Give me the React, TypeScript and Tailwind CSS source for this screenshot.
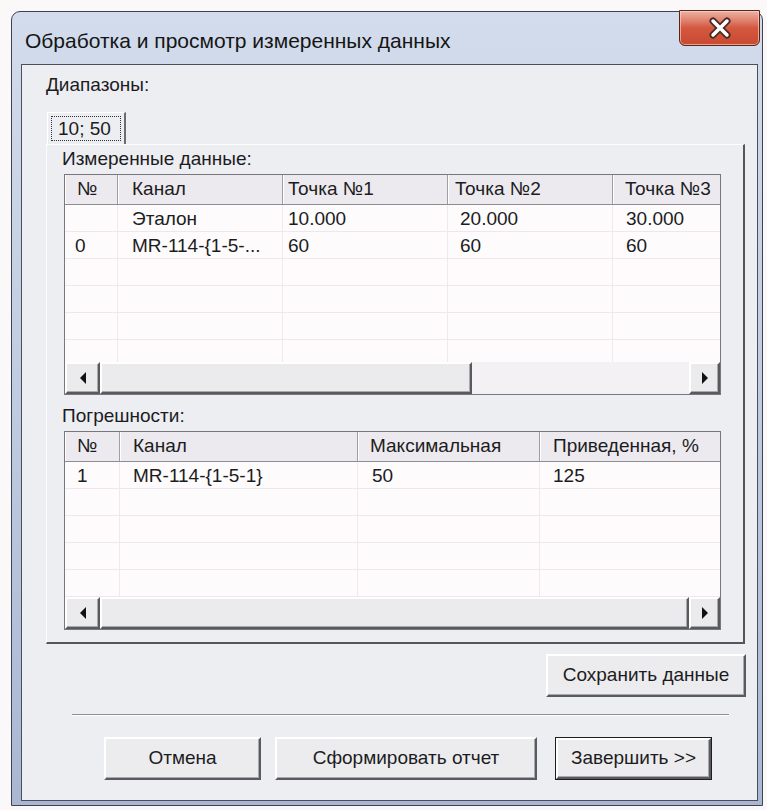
import React from 'react';

type Col = { title: string; w: string; hp: string; bp: string };

const measuredCols: Col[] = [
  { title: '№', w: 'w-[53px]', hp: 'pl-[12px]', bp: 'pl-[10px]' },
  { title: 'Канал', w: 'w-[165px]', hp: 'pl-[14px]', bp: 'pl-[14px]' },
  { title: 'Точка №1', w: 'w-[165px]', hp: 'pl-[5px]', bp: 'pl-[5px]' },
  { title: 'Точка №2', w: 'w-[165px]', hp: 'pl-[7px]', bp: 'pl-[12px]' },
  { title: 'Точка №3', w: 'w-[165px]', hp: 'pl-[12px]', bp: 'pl-[13px]' },
];

const measuredRows: string[][] = [
  ['', 'Эталон', '10.000', '20.000', '30.000'],
  ['0', 'MR-114-{1-5-...', '60', '60', '60'],
  ['', '', '', '', ''],
  ['', '', '', '', ''],
  ['', '', '', '', ''],
  ['', '', '', '', ''],
];

const errorCols: Col[] = [
  { title: '№', w: 'w-[55px]', hp: 'pl-[12px]', bp: 'pl-[12px]' },
  { title: 'Канал', w: 'w-[238px]', hp: 'pl-[13px]', bp: 'pl-[13px]' },
  { title: 'Максимальная', w: 'w-[182px]', hp: 'pl-[12px]', bp: 'pl-[14px]' },
  { title: 'Приведенная, %', w: 'w-[200px]', hp: 'pl-[13px]', bp: 'pl-[13px]' },
];

const errorRows: string[][] = [
  ['1', 'MR-114-{1-5-1}', '50', '125'],
  ['', '', '', ''],
  ['', '', '', ''],
  ['', '', '', ''],
  ['', '', '', ''],
];

const raised =
  'border-2 border-t-white border-l-white border-r-[#5a5a5e] border-b-[#5a5a5e] shadow-[inset_-1px_-1px_0_#a9a9ad] bg-[#ebebee]';

const Arrow = ({ dir }: { dir: 'left' | 'right' }) => (
  <svg width="8" height="12" viewBox="0 0 8 12">
    {dir === 'left' ? <polygon points="7,0 7,12 1,6" fill="#111" /> : <polygon points="1,0 1,12 7,6" fill="#111" />}
  </svg>
);

const HScroll = ({ thumb }: { thumb: string }) => (
  <div className="h-[32px] flex shrink-0 bg-[#f3f1f4]">
    <div className={`w-[35px] h-full flex items-center justify-center ${raised}`}>
      <Arrow dir="left" />
    </div>
    <div className="flex-1 flex">
      <div className={`h-full ${thumb} ${raised}`} />
    </div>
    <div className={`w-[31px] h-full flex items-center justify-center ${raised}`}>
      <Arrow dir="right" />
    </div>
  </div>
);

const ListView = ({ cols, rows, height, thumb }: { cols: Col[]; rows: string[][]; height: string; thumb: string }) => (
  <div className={`ml-[17px] w-[657px] ${height} border border-[#77777d] bg-[#fdfbfc] flex flex-col overflow-hidden`}>
    <div className="h-[30px] flex shrink-0 bg-[#eceaee] border-b border-[#8c8c92]">
      {cols.map((c, i) => (
        <div
          key={i}
          className={`${c.w} ${c.hp} shrink-0 h-full flex items-center border-r border-[#9e9ea4] shadow-[inset_1px_0_0_#ffffff] whitespace-nowrap`}
        >
          {c.title}
        </div>
      ))}
    </div>
    <div className="flex-1 overflow-hidden">
      {rows.map((r, ri) => (
        <div key={ri} className="h-[27px] flex border-b border-[#eee8ee]">
          {r.map((cell, ci) => (
            <div
              key={ci}
              className={`${cols[ci].w} ${cols[ci].bp} shrink-0 h-full flex items-center pt-[3px] border-r border-[#efe9ef] whitespace-nowrap`}
            >
              {cell}
            </div>
          ))}
        </div>
      ))}
    </div>
    <HScroll thumb={thumb} />
  </div>
);

const Button = ({ label, className, primary }: { label: string; className: string; primary?: boolean }) => (
  <div className={`${className} h-[43px] ${primary ? 'border border-[#1e1e1e]' : ''}`}>
    <div className={`w-full h-full flex items-center justify-center ${raised} bg-[#ececef]`}>{label}</div>
  </div>
);

const CloseButton = () => (
  <div className="absolute right-[2px] top-[-2px] w-[81px] h-[36px] rounded-b-[6px] border border-[#5b2418] bg-gradient-to-b from-[#eab2a4] via-[#d4573f] to-[#c84a30] shadow-[inset_0_0_0_1px_rgba(255,220,210,0.6)] flex items-center justify-center">
    <svg width="26" height="22" viewBox="0 0 26 22">
      <path d="M6 4 L20 18 M20 4 L6 18" stroke="#4a2a26" strokeWidth="7" strokeLinecap="round" />
      <path d="M6 4 L20 18 M20 4 L6 18" stroke="#ffffff" strokeWidth="3.5" strokeLinecap="round" />
    </svg>
  </div>
);

export default function App() {
  return (
    <div className="w-[767px] h-[810px] bg-[#fbf8fa] pt-[11px] pl-[11px] font-['Liberation_Sans','DejaVu_Sans',sans-serif] text-[19px] text-[#1c1c1e] overflow-hidden">
      <div className="relative w-[752px] h-[795px] rounded-t-[9px] border border-[#3e4352] bg-gradient-to-b from-[#d3dcec] via-[#bfcbe0] to-[#aab7d3] flex flex-col">
        {/* title bar */}
        <div className="h-[52px] shrink-0 flex items-center pl-[13px] pt-[6px] text-[21px] text-[#151515]">
          Обработка и просмотр измеренных данных
        </div>
        <CloseButton />

        {/* client area */}
        <div className="ml-[9px] mr-[4px] mb-[4px] flex-1 border border-[#4b4f5c] bg-[#edeef2] flex flex-col">
          <div className="mt-[9px] pl-[24px] leading-[22px]">Диапазоны:</div>

          <div className="mt-[16px] ml-[25px] w-[79px] h-[32px] border-l border-t border-white border-r-2 border-r-[#6c6c72] p-[3px]">
            <div className="w-full h-full border border-dotted border-[#333] flex items-center pl-[6px] leading-none">
              10; 50
            </div>
          </div>

          {/* tab page */}
          <div className="ml-[24px] w-[699px] h-[500px] border-t border-l border-[#fdfdff] border-r-2 border-b-2 border-r-[#55565c] border-b-[#55565c] flex flex-col">
            <div className="mt-[3px] pl-[15px] leading-[22px]">Измеренные данные:</div>
            <div className="mt-[4px]">
              <ListView cols={measuredCols} rows={measuredRows} height="h-[221px]" thumb="w-[372px]" />
            </div>
            <div className="mt-[10px] pl-[15px] leading-[22px]">Погрешности:</div>
            <div className="mt-[4px]">
              <ListView cols={errorCols} rows={errorRows} height="h-[199px]" thumb="w-full" />
            </div>
          </div>

          <div className="mt-[10px] ml-[524px]">
            <Button label="Сохранить данные" className="w-[200px] h-[42px]" />
          </div>

          <div className="mt-[17px] ml-[50px] w-[657px] h-[2px] border-t border-[#8e8e94] border-b border-b-white" />

          <div className="mt-[21px] ml-[82px] flex">
            <Button label="Отмена" className="w-[157px]" />
            <Button label="Сформировать отчет" className="ml-[14px] w-[262px]" />
            <Button label="Завершить >>" className="ml-[18px] w-[157px]" primary />
          </div>
        </div>
      </div>
    </div>
  );
}
